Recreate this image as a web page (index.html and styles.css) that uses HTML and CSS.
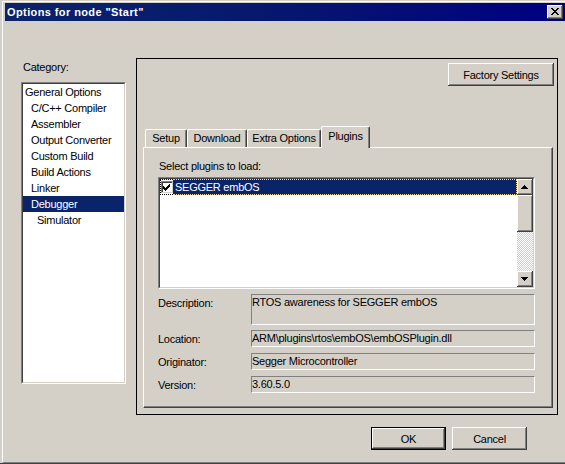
FILE: index.html
```html
<!DOCTYPE html>
<html>
<head>
<meta charset="utf-8">
<link rel="stylesheet" href="styles.css">
</head>
<body>
<div class="window">
  <div class="frame">
    <div class="titlebar">
      <span class="title">Options for node &quot;Start&quot;</span>
      <div class="close">
        <svg width="8" height="7" viewBox="0 0 8 7" shape-rendering="crispEdges"><path fill="#000" d="M0 0h2v1h-2z M6 0h2v1h-2z M1 1h2v1h-2z M5 1h2v1h-2z M2 2h4v1h-4z M3 3h2v1h-2z M2 4h4v1h-4z M1 5h2v1h-2z M5 5h2v1h-2z M0 6h2v1h-2z M6 6h2v1h-2z"/></svg>
      </div>
    </div>
    <div class="content">
      <div class="main">
        <div class="leftcol">
          <div class="cat-label">Category:</div>
          <div class="sunken catlist">
            <div class="sunken-in list-white">
              <div class="item lvl0">General Options</div>
              <div class="item lvl1">C/C++ Compiler</div>
              <div class="item lvl1">Assembler</div>
              <div class="item lvl1">Output Converter</div>
              <div class="item lvl1">Custom Build</div>
              <div class="item lvl1">Build Actions</div>
              <div class="item lvl1">Linker</div>
              <div class="item lvl1 selected">Debugger</div>
              <div class="item lvl2">Simulator</div>
            </div>
          </div>
        </div>
        <div class="pageframe">
          <div class="factory-row"><button class="btn factory">Factory Settings</button></div>
          <div class="tabs">
            <div class="tab t-setup">Setup</div>
            <div class="tab t-download">Download</div>
            <div class="tab t-extra">Extra Options</div>
            <div class="tab t-plugins active">Plugins</div>
          </div>
          <div class="tabpage">
            <div class="sel-label">Select plugins to load:</div>
            <div class="sunken pluglist">
              <div class="sunken-in list-white plug-inner">
                <div class="plug-items">
                  <div class="plug-row">
                    <div class="checkcell">
                      <div class="checkbox">
                        <svg width="8" height="8" viewBox="0 0 8 8" shape-rendering="crispEdges"><path fill="#000" d="M1 3h1v3h-1z M2 4h1v3h-1z M3 5h1v3h-1z M4 4h1v3h-1z M5 3h1v3h-1z M6 2h1v3h-1z M7 1h1v3h-1z"/></svg>
                      </div>
                    </div>
                    <div class="plug-text">SEGGER embOS</div>
                  </div>
                </div>
                <div class="scrollbar">
                  <div class="sb-btn">
                    <svg width="7" height="4" viewBox="0 0 7 4" shape-rendering="crispEdges"><path fill="#000" d="M3 0h1v1h-1z M2 1h3v1h-3z M1 2h5v1h-5z M0 3h7v1h-7z"/></svg>
                  </div>
                  <div class="sb-thumb"></div>
                  <div class="sb-track"></div>
                  <div class="sb-btn">
                    <svg width="7" height="4" viewBox="0 0 7 4" shape-rendering="crispEdges"><path fill="#000" d="M0 0h7v1h-7z M1 1h5v1h-5z M2 2h3v1h-3z M3 3h1v1h-1z"/></svg>
                  </div>
                </div>
              </div>
            </div>
            <div class="inforow r-desc">
              <div class="info-label">Description:</div>
              <div class="info-box tall">RTOS awareness for SEGGER embOS</div>
            </div>
            <div class="inforow r-loc">
              <div class="info-label">Location:</div>
              <div class="info-box">ARM\plugins\rtos\embOS\embOSPlugin.dll</div>
            </div>
            <div class="inforow r-orig">
              <div class="info-label">Originator:</div>
              <div class="info-box">Segger Microcontroller</div>
            </div>
            <div class="inforow r-ver">
              <div class="info-label">Version:</div>
              <div class="info-box">3.60.5.0</div>
            </div>
          </div>
        </div>
      </div>
      <div class="buttons">
        <button class="btn default dlg">OK</button>
        <button class="btn dlg">Cancel</button>
      </div>
    </div>
  </div>
</div>
</body>
</html>
```

FILE: styles.css
```css
html, body {
  margin: 0;
  padding: 0;
}
body {
  background: #d4d0c8;
  font-family: "Liberation Sans", Arial, sans-serif;
  font-size: 11px;
  letter-spacing: -0.25px;
  color: #000;
  width: 565px;
  height: 464px;
  overflow: hidden;
}
.window {
  width: 565px;
  height: 464px;
  box-sizing: border-box;
  padding: 1px 0 0 2px;
  border-bottom: 1px solid #404040;
  background: #d4d0c8;
  overflow: hidden;
}
.frame {
  height: 100%;
  box-sizing: border-box;
  border-top: 1px solid #fff;
  border-left: 1px solid #fff;
  border-bottom: 1px solid #808080;
  padding: 1px 0 0 2px;
}
.titlebar {
  height: 18px;
  display: flex;
  align-items: flex-start;
  background: linear-gradient(to right, #0a246a 0%, #07186e 45%, #000080 100%);
  color: #fff;
  font-weight: bold;
  letter-spacing: 0.4px;
  padding-left: 2px;
}
.title {
  flex: 1;
  line-height: 18px;
  white-space: nowrap;
}
.close {
  width: 16px;
  height: 14px;
  box-sizing: border-box;
  margin: 2px 2px 0 0;
  padding: 3px 0 0 4px;
  background: #d4d0c8;
  box-shadow: inset -1px -1px #404040, inset 1px 1px #fff, inset -2px -2px #808080;
}
.close svg, .checkbox svg, .sb-btn svg {
  display: block;
}
.content {
  padding: 37px 0 0 16px;
}
.main {
  display: flex;
}
.leftcol {
  width: 105px;
  margin-right: 10px;
}
.cat-label {
  line-height: 13px;
  margin: 3px 0 8px 2px;
}
.sunken {
  box-sizing: border-box;
  border-top: 1px solid #808080;
  border-left: 1px solid #808080;
  border-right: 1px solid #fff;
  border-bottom: 1px solid #fff;
}
.sunken-in {
  box-sizing: border-box;
  height: 100%;
  border-top: 1px solid #404040;
  border-left: 1px solid #404040;
  border-right: 1px solid #d4d0c8;
  border-bottom: 1px solid #d4d0c8;
}
.list-white {
  background: #fff;
}
.catlist {
  width: 105px;
  height: 302px;
}
.item {
  height: 16px;
  line-height: 16px;
  white-space: nowrap;
}
.lvl0 { padding-left: 2px; }
.lvl1 { padding-left: 8px; }
.lvl2 { padding-left: 14px; }
.selected {
  background: #0a246a;
  color: #fff;
}
.pageframe {
  width: 422px;
  height: 357px;
  box-sizing: border-box;
  border: 1px solid #000;
  padding: 4px 3px 0 6px;
}
.factory-row {
  display: flex;
  justify-content: flex-end;
}
.btn {
  font-family: inherit;
  font-size: 11px;
  letter-spacing: -0.25px;
  color: #000;
  background: #d4d0c8;
  border: none;
  margin: 0;
  padding: 0;
  box-sizing: border-box;
  box-shadow: inset -1px -1px #404040, inset 1px 1px #fff, inset -2px -2px #808080;
  text-align: center;
}
.factory {
  width: 106px;
  height: 23px;
}
.tabs {
  display: flex;
  align-items: flex-end;
  height: 21px;
  margin: 40px 0 0 2px;
}
.tab {
  height: 18px;
  box-sizing: border-box;
  background: #d4d0c8;
  border-top: 1px solid #fff;
  border-left: 1px solid #fff;
  border-right: 1px solid #404040;
  border-radius: 2px 2px 0 0;
  box-shadow: inset -1px 0 #808080;
  line-height: 16px;
  text-align: center;
  white-space: nowrap;
}
.t-setup { width: 42px; }
.t-download { width: 60px; }
.t-extra { width: 74px; }
.t-plugins { width: 49px; }
.tab.active {
  height: 22px;
  margin-bottom: -1px;
  padding-top: 1px;
  position: relative;
  z-index: 1;
}
.tabpage {
  height: 261px;
  margin-right: 1px;
  box-sizing: border-box;
  border-top: 1px solid #fff;
  border-left: 1px solid #fff;
  border-right: 1px solid #404040;
  border-bottom: 1px solid #404040;
  box-shadow: inset -1px -1px #808080;
  padding: 12px 0 0 14px;
}
.sel-label {
  line-height: 13px;
  margin-left: 1px;
}
.pluglist {
  width: 377px;
  height: 112px;
  margin-top: 4px;
}
.plug-inner {
  display: flex;
}
.plug-items {
  flex: 1;
}
.plug-row {
  display: flex;
  height: 16px;
}
.checkcell {
  width: 13px;
  box-sizing: border-box;
  border-top: 1px dotted #000;
  border-bottom: 1px dotted #000;
  border-left: 1px dotted #000;
  padding-top: 1px;
}
.checkbox {
  width: 12px;
  height: 12px;
  box-sizing: border-box;
  border-top: 1px solid #808080;
  border-left: 1px solid #808080;
  border-right: 1px solid #d4d0c8;
  border-bottom: 1px solid #d4d0c8;
  box-shadow: inset 1px 1px #404040;
  background: #fff;
  padding: 1px 0 0 1px;
}
.checkbox svg {
  margin: 0 0 0 -1px;
}
.plug-text {
  flex: 1;
  box-sizing: border-box;
  background: #0a246a;
  color: #fff;
  border-top: 1px dotted #f5db95;
  border-bottom: 1px dotted #f5db95;
  border-right: 1px dotted #f5db95;
  padding-left: 2px;
  line-height: 14px;
  white-space: nowrap;
}
.scrollbar {
  width: 16px;
  display: flex;
  flex-direction: column;
}
.sb-btn {
  width: 16px;
  height: 16px;
  box-sizing: border-box;
  background: #d4d0c8;
  box-shadow: inset -1px -1px #404040, inset 1px 1px #fff, inset -2px -2px #808080;
  padding: 6px 0 0 4px;
}
.sb-thumb {
  height: 37px;
  background: #d4d0c8;
  box-shadow: inset -1px -1px #404040, inset 1px 1px #fff, inset -2px -2px #808080;
}
.sb-track {
  flex: 1;
  background: repeating-conic-gradient(#ffffff 0 25%, #d4d0c8 0 50%) 0 0 / 2px 2px;
}
.inforow {
  display: flex;
}
.r-desc { margin-top: 5px; }
.r-loc { margin-top: 5px; }
.r-orig { margin-top: 6px; }
.r-ver { margin-top: 6px; }
.info-label {
  width: 93px;
  padding-top: 3px;
  line-height: 13px;
  white-space: nowrap;
}
.info-box {
  width: 284px;
  height: 17px;
  box-sizing: border-box;
  border-top: 1px solid #808080;
  border-left: 1px solid #808080;
  border-right: 1px solid #fff;
  border-bottom: 1px solid #fff;
  line-height: 15px;
  white-space: nowrap;
  overflow: hidden;
}
.info-box.tall {
  height: 31px;
  line-height: 13px;
  padding-top: 1px;
}
.buttons {
  display: flex;
  justify-content: flex-end;
  gap: 6px;
  margin-top: 12px;
  padding-right: 38px;
}
.dlg {
  width: 75px;
  height: 23px;
}
.btn.default {
  border: 1px solid #000;
}
```
